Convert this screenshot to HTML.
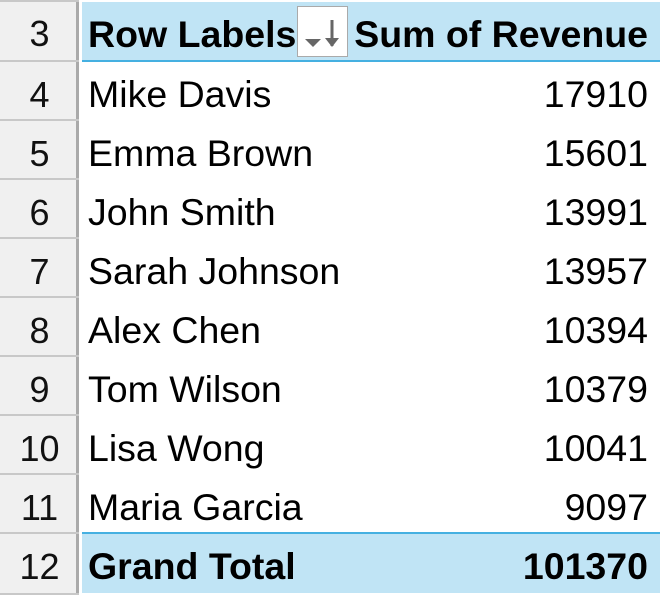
<!DOCTYPE html>
<html><head><style>
body{margin:0;width:660px;height:595px;background:#fff;overflow:hidden;font-family:"Liberation Sans",sans-serif;position:relative}
.rh{position:absolute;left:0;width:79px;background:#f0f0f0;border-right:3px solid #aaa;text-align:center;font-size:33px;color:#111;box-sizing:border-box}
.rl{position:absolute;left:0;width:79px;height:2px;background:#c8c8c8}
.c{position:absolute;left:82px;width:578px;font-size:37.5px;color:#000}
.c span{position:absolute;top:3px}
.n{left:6px}.v{right:12px}
</style></head><body>
<div class="rh" style="top:0;height:595px;line-height:1"></div>
<div style="position:absolute;left:82px;top:2px;width:578px;height:58px;background:#c0e4f5"></div>
<div style="position:absolute;left:82px;top:60px;width:578px;height:2px;background:#45b0e1"></div>
<div style="position:absolute;left:82px;top:532px;width:578px;height:2px;background:#45b0e1"></div>
<div style="position:absolute;left:82px;top:534px;width:578px;height:59px;background:#c0e4f5"></div>
<div style="position:absolute;left:297px;top:6px;width:49px;height:49px;background:#fff;border:1px solid #aaa"></div>
<svg style="position:absolute;left:297px;top:6px" width="51" height="51"><polygon points="8,33 24,33 16,41" fill="#666"/><line x1="35" y1="14" x2="35" y2="40" stroke="#666" stroke-width="3"/><polygon points="28,32 42,32 35,41" fill="#666"/></svg>
<div id="r"></div>
<script>
var rows=[["3","Row Labels","Sum of Revenue",1],["4","Mike Davis","17910"],["5","Emma Brown","15601"],["6","John Smith","13991"],["7","Sarah Johnson","13957"],["8","Alex Chen","10394"],["9","Tom Wilson","10379"],["10","Lisa Wong","10041"],["11","Maria Garcia","9097"],["12","Grand Total","101370",1]];
var h="";
rows.forEach(function(r,i){var top=i==0?2:62+(i-1)*59;if(i==9)top=534;var hh=i==0?58:59;
h+='<div class="rl" style="top:'+(top-2)+'px"></div>';
h+='<div style="position:absolute;left:0;width:79px;top:'+(top+3)+'px;height:'+hh+'px;line-height:'+hh+'px;text-align:center;font-size:36px;color:#111">'+r[0]+'</div>';
var w=r[3]?'font-weight:bold;':'';
h+='<div class="c" style="top:'+top+'px;height:'+hh+'px;line-height:'+hh+'px;'+w+'"><span class="n">'+r[1]+'</span><span class="v">'+r[2]+'</span></div>';});
h+='<div class="rl" style="top:593px"></div>';
document.getElementById("r").innerHTML=h;
</script>
</body></html>
